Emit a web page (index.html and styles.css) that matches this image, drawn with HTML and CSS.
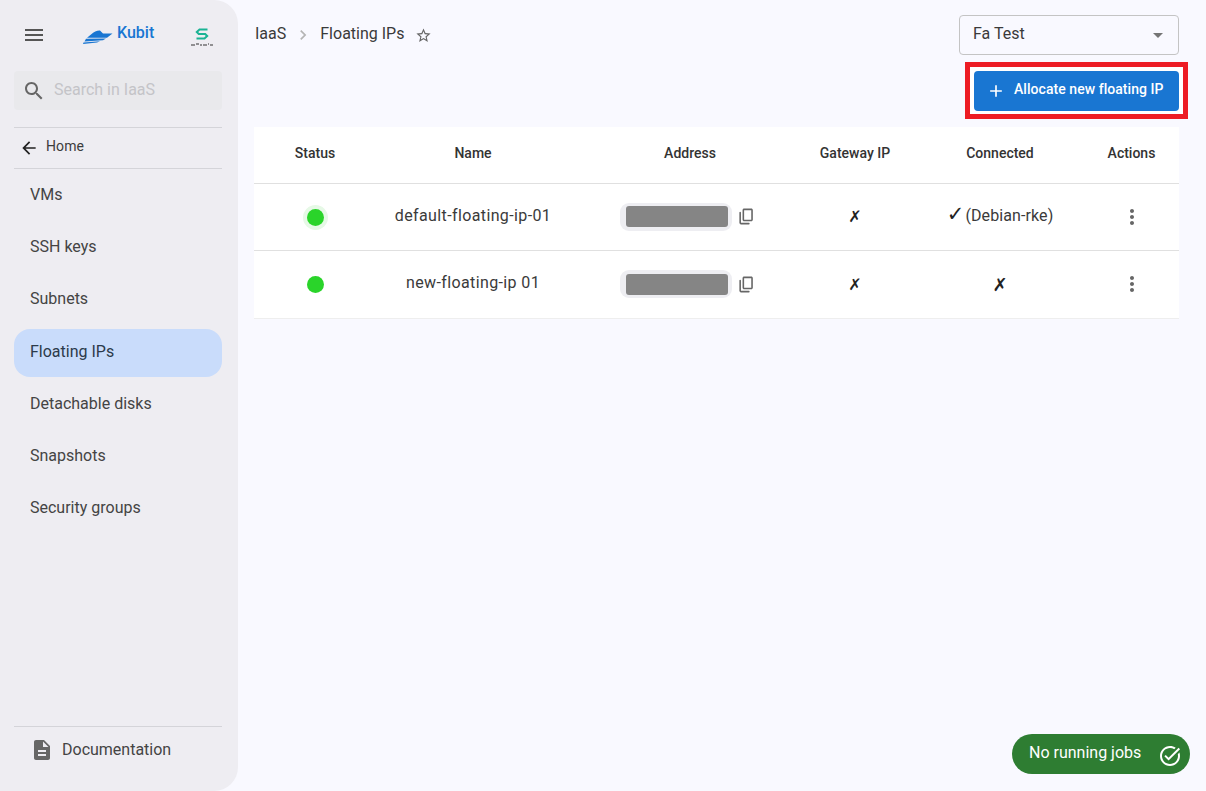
FILE: index.html
```html
<!DOCTYPE html>
<html lang="en">
<head>
    <meta charset="UTF-8">
    <meta name="viewport" content="width=device-width, initial-scale=1.0">
    <title>Floating IPs</title>
    <link rel="stylesheet" href="styles.css">
</head>
<body>

    <aside class="sidebar">
        <div class="brand-row">
            <svg class="icon menu-icon" viewBox="0 0 24 24"><path d="M3 18h18v-2H3v2zm0-5h18v-2H3v2zm0-7v2h18V6H3z"/></svg>
            <div class="brand">
                <svg class="boat" viewBox="0 0 30 15">
                    <path d="M8 5.5 C11 3 14 1.4 17 1.6 L20 4.4 L29.5 4.4 L24 8.8 L4 8.8 Z"/>
                    <path d="M3 9.8 L23 9.6 L20 11.2 L1.5 12.4 Z"/>
                    <path d="M0.5 13.4 L17 12.2 L14 13.6 L0 14.9 Z"/>
                </svg>
                <span class="brand-name">Kubit</span>
            </div>
            <div class="partner">
                <svg class="partner-mark" viewBox="0 0 14 12"><path d="M12.5 1.5 H4.5 L1.8 4 L3.8 6 H10.2 L12.2 8 L9.5 10.5 H1.5"/></svg>
                <svg class="partner-text" viewBox="0 0 22 3"><path d="M0 2h4M5 1h3M9 2h2M12 2h4M17 1h1M19 2h3"/></svg>
            </div>
        </div>

        <div class="search">
            <svg class="icon" viewBox="0 0 24 24"><path d="M15.5 14h-.79l-.28-.27C15.41 12.59 16 11.11 16 9.5 16 5.91 13.09 3 9.5 3S3 5.91 3 9.5 5.91 16 9.5 16c1.61 0 3.09-.59 4.23-1.57l.27.28v.79l5 4.99L20.49 19l-4.99-5zm-6 0C7.01 14 5 11.99 5 9.5S7.01 5 9.5 5 14 7.01 14 9.5 11.99 14 9.5 14z"/></svg>
            <span>Search in IaaS</span>
        </div>

        <div class="home-link">
            <svg class="arrow" viewBox="0 0 24 24"><path d="M20 11H7.83l5.59-5.59L12 4l-8 8 8 8 1.41-1.41L7.83 13H20v-2z"/></svg>
            <span>Home</span>
        </div>

        <nav class="nav">
            <a class="nav-item">VMs</a>
            <a class="nav-item">SSH keys</a>
            <a class="nav-item">Subnets</a>
            <a class="nav-item active">Floating IPs</a>
            <a class="nav-item">Detachable disks</a>
            <a class="nav-item">Snapshots</a>
            <a class="nav-item">Security groups</a>
        </nav>

        <div class="doc-link">
            <svg class="icon" viewBox="0 0 24 24"><path d="M14 2H6c-1.1 0-1.99.9-1.99 2L4 20c0 1.1.89 2 1.99 2H18c1.1 0 2-.9 2-2V8l-6-6zm2 16H8v-2h8v2zm0-4H8v-2h8v2zm-3-5V3.5L18.5 9H13z"/></svg>
            <span>Documentation</span>
        </div>
    </aside>

    <main class="main">
        <div class="top-row">
            <div class="breadcrumb">
                <span>IaaS</span>
                <svg class="crumb-sep" viewBox="0 0 24 24"><path d="M10 6L8.59 7.41 13.17 12l-4.58 4.59L10 18l6-6z"/></svg>
                <span>Floating IPs</span>
                <svg class="star" viewBox="0 0 24 24"><path d="M22 9.24l-7.19-.62L12 2 9.19 8.63 2 9.24l5.46 4.73L5.82 21 12 17.27 18.18 21l-1.63-7.03L22 9.24zM12 15.4l-3.76 2.27 1-4.28-3.32-2.88 4.38-.38L12 6.1l1.71 4.04 4.38.38-3.32 2.88 1 4.28L12 15.4z"/></svg>
            </div>
            <div class="project-select">
                <span>Fa Test</span>
                <span class="caret"></span>
            </div>
        </div>

        <div class="action-row">
            <div class="highlight">
                <button class="primary-btn" type="button">
                    <svg viewBox="0 0 24 24"><path d="M19 13h-6v6h-2v-6H5v-2h6V5h2v6h6v2z"/></svg>
                    <span>Allocate new floating IP</span>
                </button>
            </div>
        </div>

        <table class="ip-table">
            <colgroup>
                <col class="col-status">
                <col class="col-name">
                <col class="col-address">
                <col class="col-gateway">
                <col class="col-connected">
                <col class="col-actions">
            </colgroup>
            <thead>
                <tr>
                    <th>Status</th>
                    <th>Name</th>
                    <th>Address</th>
                    <th>Gateway IP</th>
                    <th>Connected</th>
                    <th class="actions-cell">Actions</th>
                </tr>
            </thead>
            <tbody>
                <tr>
                    <td><span class="dot halo"></span></td>
                    <td class="name-cell">default-floating-ip-01</td>
                    <td>
                        <div class="address">
                            <span class="chip"><span class="redacted"></span></span>
                            <svg class="copy" viewBox="0 0 24 24"><path d="M15 20H5V7c0-.55-.45-1-1-1s-1 .45-1 1v13c0 1.1.9 2 2 2h10c.55 0 1-.45 1-1s-.45-1-1-1zm5-4V4c0-1.1-.9-2-2-2H9c-1.1 0-2 .9-2 2v12c0 1.1.9 2 2 2h9c1.1 0 2-.9 2-2zm-2 0H9V4h9v12z"/></svg>
                        </div>
                    </td>
                    <td class="mark">✗</td>
                    <td class="connected-cell"><span class="mark tick">✓</span>(Debian-rke)</td>
                    <td class="actions-cell"><svg class="more" viewBox="0 0 24 24"><path d="M12 8c1.1 0 2-.9 2-2s-.9-2-2-2-2 .9-2 2 .9 2 2 2zm0 2c-1.1 0-2 .9-2 2s.9 2 2 2 2-.9 2-2-.9-2-2-2zm0 6c-1.1 0-2 .9-2 2s.9 2 2 2 2-.9 2-2-.9-2-2-2z"/></svg></td>
                </tr>
                <tr>
                    <td class="dot-cell"><span class="dot"></span></td>
                    <td class="name-cell">new-floating-ip 01</td>
                    <td>
                        <div class="address">
                            <span class="chip"><span class="redacted"></span></span>
                            <svg class="copy" viewBox="0 0 24 24"><path d="M15 20H5V7c0-.55-.45-1-1-1s-1 .45-1 1v13c0 1.1.9 2 2 2h10c.55 0 1-.45 1-1s-.45-1-1-1zm5-4V4c0-1.1-.9-2-2-2H9c-1.1 0-2 .9-2 2v12c0 1.1.9 2 2 2h9c1.1 0 2-.9 2-2zm-2 0H9V4h9v12z"/></svg>
                        </div>
                    </td>
                    <td class="mark">✗</td>
                    <td class="mark big">✗</td>
                    <td class="actions-cell"><svg class="more" viewBox="0 0 24 24"><path d="M12 8c1.1 0 2-.9 2-2s-.9-2-2-2-2 .9-2 2 .9 2 2 2zm0 2c-1.1 0-2 .9-2 2s.9 2 2 2 2-.9 2-2-.9-2-2-2zm0 6c-1.1 0-2 .9-2 2s.9 2 2 2 2-.9 2-2-.9-2-2-2z"/></svg></td>
                </tr>
            </tbody>
        </table>
    </main>

    <div class="jobs-pill">
        <span>No running jobs</span>
        <svg viewBox="0 0 24 24"><path d="M22 5.18 10.59 16.6l-4.24-4.24 1.41-1.41 2.83 2.83 10-10L22 5.18zm-2.21 5.04c.13.57.21 1.17.21 1.78 0 4.42-3.58 8-8 8s-8-3.58-8-8 3.58-8 8-8c1.58 0 3.04.46 4.28 1.25l1.44-1.44C16.1 2.67 14.13 2 12 2 6.48 2 2 6.48 2 12s4.48 10 10 10 10-4.48 10-10c0-1.19-.22-2.33-.6-3.39l-1.61 1.61z"/></svg>
    </div>

</body>
</html>
```

FILE: styles.css
```css
* {
    margin: 0;
    padding: 0;
    box-sizing: border-box;
}

body {
    font-family: 'Roboto', 'Liberation Sans', sans-serif;
    background: #f9f9ff;
    color: #333;
    display: flex;
    height: 791px;
    overflow: hidden;
}

.icon {
    width: 24px;
    height: 24px;
    fill: #666;
    flex-shrink: 0;
}

/* sidebar */
.sidebar {
    width: 238px;
    height: 791px;
    flex-shrink: 0;
    background: #eeedf2;
    border-radius: 0 24px 24px 0;
    padding: 0 16px 0 14px;
    display: flex;
    flex-direction: column;
}

.brand-row {
    display: flex;
    align-items: center;
    height: 71px;
    padding: 0 0 2px 8px;
}

.menu-icon {
    fill: #555;
}

.brand {
    display: flex;
    align-items: center;
    margin-left: 37px;
    width: 108px;
}

.boat {
    width: 30px;
    height: 15px;
    fill: #1976d2;
    margin: 4px 4px 0 0;
}

.brand-name {
    color: #1976d2;
    font-size: 16px;
    font-weight: 500;
    margin-top: -4px;
}

.partner {
    display: flex;
    flex-direction: column;
    align-items: center;
    gap: 3px;
    margin-top: 4px;
}

.partner-mark {
    width: 14px;
    height: 12px;
    fill: none;
    stroke: #1ab394;
    stroke-width: 2;
}

.partner-text {
    width: 22px;
    height: 3px;
    fill: none;
    stroke: #333;
    stroke-width: 1;
}

.search {
    height: 39px;
    background: #e9e9ec;
    border-radius: 4px;
    display: flex;
    align-items: center;
    gap: 8px;
    padding-left: 8px;
    color: #c4c4c8;
    font-size: 16px;
}

.search span {
    padding-bottom: 2px;
}

.home-link {
    margin-top: 17px;
    height: 42px;
    border-top: 1px solid #d4d4d9;
    border-bottom: 1px solid #d4d4d9;
    display: flex;
    align-items: center;
    gap: 7px;
    padding-left: 5px;
    font-size: 14px;
    letter-spacing: 0.1px;
    color: #3c3c3c;
}

.home-link span {
    padding-bottom: 4px;
}

.arrow {
    width: 20px;
    height: 20px;
    fill: #222;
}

.nav {
    flex: 1;
    display: flex;
    flex-direction: column;
    padding-top: 3px;
    gap: 4.2px;
}

.nav-item {
    height: 48px;
    display: flex;
    align-items: center;
    padding: 0 0 3px 16px;
    border-radius: 16px;
    font-size: 16px;
    color: #444;
}

.nav-item.active {
    background: #c9dcfb;
    color: #2c3a4a;
}

.doc-link {
    margin-bottom: 18px;
    height: 47px;
    border-top: 1px solid #d4d4d9;
    display: flex;
    align-items: center;
    gap: 8px;
    padding-left: 16px;
    font-size: 16px;
    color: #444;
}

.doc-link span {
    padding-bottom: 2px;
}

/* main area */
.main {
    flex: 1;
    min-width: 0;
    padding: 15px 27px 0 16px;
}

.top-row {
    display: flex;
    justify-content: space-between;
    align-items: flex-start;
}

.breadcrumb {
    display: flex;
    align-items: center;
    height: 36px;
    padding-left: 1px;
    font-size: 16px;
    color: #3a3a3a;
}

.crumb-sep {
    width: 20px;
    height: 20px;
    fill: #b5b5b5;
    margin: 3px 7px 0 7px;
}

.star {
    width: 17px;
    height: 17px;
    fill: #666;
    margin: 5px 0 0 11px;
}

.project-select {
    width: 220px;
    height: 40px;
    border: 1px solid #c4c4c4;
    border-radius: 4px;
    padding: 0 15px 0 13px;
    display: flex;
    align-items: center;
    justify-content: space-between;
    font-size: 16px;
    color: #3a3a3a;
}

.project-select span:first-child {
    padding-bottom: 3px;
}

.caret {
    width: 0;
    height: 0;
    border-left: 5px solid transparent;
    border-right: 5px solid transparent;
    border-top: 5px solid #757575;
    margin-top: 1px;
}

.action-row {
    display: flex;
    justify-content: flex-end;
    margin-top: 7px;
    margin-right: -9px;
}

/* red marker drawn round the button */
.highlight {
    border: 5px solid #ed1c24;
    padding: 4px 4px 3px;
    background: #fff;
}

.primary-btn {
    width: 205px;
    height: 40px;
    background: #1976d2;
    color: #fff;
    border: none;
    border-radius: 4px;
    font-family: inherit;
    font-size: 14px;
    font-weight: 500;
    letter-spacing: 0.05px;
    display: flex;
    align-items: center;
    padding-left: 12px;
    gap: 8px;
}

.primary-btn span {
    padding-bottom: 4px;
}

.primary-btn svg {
    width: 20px;
    height: 20px;
    fill: #fff;
}

/* table */
.ip-table {
    width: 100%;
    margin-top: 8px;
    background: #fff;
    border-collapse: collapse;
    table-layout: fixed;
}

.col-status { width: 122px; }
.col-name { width: 194px; }
.col-address { width: 240px; }
.col-gateway { width: 90px; }
.col-connected { width: 200px; }
.col-actions { width: 79px; }

.ip-table th {
    height: 56px;
    padding-bottom: 3px;
    font-size: 14px;
    font-weight: 500;
    color: #333;
    text-align: center;
    border-bottom: 1px solid #e0e0e0;
}

.ip-table td {
    height: 67px;
    font-size: 16px;
    color: #3a3a3a;
    text-align: center;
    border-bottom: 1px solid #e0e0e0;
}

.ip-table tbody tr:last-child td {
    height: 68px;
    border-bottom-color: #eeeeee;
}

.ip-table .dot-cell {
    padding-bottom: 2px;
}

.ip-table .name-cell {
    padding-bottom: 3px;
    letter-spacing: 0.38px;
}

.ip-table .connected-cell {
    padding-bottom: 4px;
    letter-spacing: 0.1px;
}

.actions-cell {
    padding-right: 16px;
}

.dot {
    display: inline-block;
    width: 17px;
    height: 17px;
    border-radius: 50%;
    background: #2ad42a;
    vertical-align: middle;
}

.dot.halo {
    box-shadow: 0 0 0 4px #e6f9e6;
}

.address {
    display: flex;
    align-items: center;
    justify-content: center;
    gap: 5px;
    padding-right: 4px;
}

.chip {
    width: 112px;
    height: 28px;
    background: #eeeef2;
    border-radius: 9px;
    padding-left: 2px;
    display: flex;
    align-items: center;
    justify-content: center;
}

.redacted {
    width: 102px;
    height: 21px;
    background: #858585;
    border-radius: 3px;
}

.copy {
    width: 19px;
    height: 19px;
    fill: #666;
}

.ip-table .mark,
.mark {
    font-family: 'DejaVu Sans', sans-serif;
    color: #222;
}

.ip-table .big {
    font-size: 18px;
}

.tick {
    font-size: 21px;
    line-height: 1;
    margin-right: 1px;
}

.more {
    width: 24px;
    height: 24px;
    fill: #666;
    vertical-align: middle;
}

/* jobs status, floats over the page */
.jobs-pill {
    position: fixed;
    right: 16px;
    bottom: 17px;
    width: 178px;
    height: 40px;
    background: #2e7d32;
    border-radius: 20px;
    color: #fff;
    font-size: 16px;
    display: flex;
    align-items: center;
    justify-content: space-between;
    padding: 0 8px 0 17px;
}

.jobs-pill span {
    margin-top: -4px;
}

.jobs-pill svg {
    width: 24px;
    height: 24px;
    fill: #fff;
    margin-top: 3px;
}
```
